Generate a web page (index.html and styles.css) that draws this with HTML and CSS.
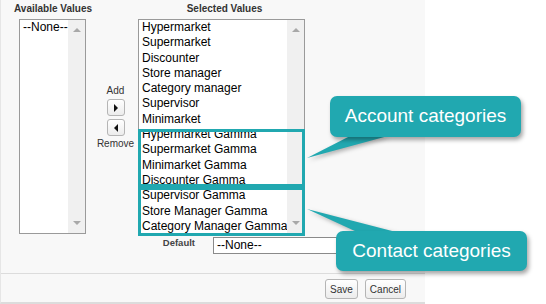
FILE: index.html
```html
<!doctype html>
<html lang="en">
<head>
  <meta charset="utf-8">
  <title>Picklist values</title>
  <link rel="stylesheet" href="styles.css">
</head>
<body>

<div class="panel">
  <div class="picker">
    <div class="col col-avail">
      <div class="lbl">Available Values</div>
      <div class="listbox avail">
        <div class="opts">
          <div class="opt">--None--</div>
        </div>
        <div class="sbar"><span class="up"></span><span class="down"></span></div>
      </div>
    </div>

    <div class="col col-btns">
      <div class="small">Add</div>
      <button class="arrow"><span class="tri-right"></span></button>
      <button class="arrow"><span class="tri-left"></span></button>
      <div class="small">Remove</div>
    </div>

    <div class="col col-sel">
      <div class="lbl center">Selected Values</div>
      <div class="listbox sel">
        <div class="opts">
          <div class="opt">Hypermarket</div>
          <div class="opt">Supermarket</div>
          <div class="opt">Discounter</div>
          <div class="opt">Store manager</div>
          <div class="opt">Category manager</div>
          <div class="opt">Supervisor</div>
          <div class="opt">Minimarket</div>
          <div class="opt">Hypermarket Gamma</div>
          <div class="opt">Supermarket Gamma</div>
          <div class="opt">Minimarket Gamma</div>
          <div class="opt">Discounter Gamma</div>
          <div class="opt">Supervisor Gamma</div>
          <div class="opt">Store Manager Gamma</div>
          <div class="opt">Category Manager Gamma</div>
        </div>
        <div class="sbar"><span class="up"></span><span class="down"></span></div>
        <!-- highlight boxes drawn over the list -->
        <div class="mark mark-account"></div>
        <div class="mark mark-contact"></div>
      </div>
    </div>
  </div>

  <div class="default-row">
    <span class="dlbl">Default</span>
    <div class="dsel">--None--</div>
  </div>

  <div class="footer">
    <button class="btn">Save</button>
    <button class="btn">Cancel</button>
  </div>
</div>

<svg class="tails" width="546" height="304" viewBox="0 0 546 304">
  <polygon points="350,136 388,136 307,158" fill="#21a8b0"/>
  <polygon points="357,232 396,232 307,209" fill="#21a8b0"/>
</svg>
<div class="callout callout-account">Account categories</div>
<div class="callout callout-contact">Contact categories</div>

</body>
</html>
```

FILE: styles.css
```css
body {
  margin: 0;
  background: #fff;
  font-family: "Liberation Sans", Arial, sans-serif;
  color: #000;
}

.panel {
  width: 425px;
  height: 304px;
  box-sizing: border-box;
  background: #f8f8f8;
  border-left: 1px solid #e6e6e6;
  border-bottom: 2px solid #dcdcdc;
}

.picker {
  display: flex;
  padding-left: 13px;
  padding-top: 3px;
}

.col-avail {
  width: 72px;
}
.col-btns {
  width: 52px;
  box-sizing: border-box;
  display: flex;
  flex-direction: column;
  align-items: center;
  padding-top: 82px;
  padding-left: 7px;
}
.col-sel {
  width: 167px;
}

.lbl {
  font-size: 10px;
  font-weight: bold;
  color: #333;
  line-height: 12px;
  height: 12px;
  margin-bottom: 4px;
  white-space: nowrap;
}
.lbl.center {
  text-align: center;
  padding-left: 6px;
}

.listbox {
  position: relative;
  height: 215px;
  box-sizing: border-box;
  border: 1px solid #9a9a9a;
  background: #fff;
  display: flex;
}
.listbox.avail {
  width: 67px;
  margin-left: 5px;
}
.listbox.sel {
  width: 167px;
}

.opts {
  flex: 1;
  font-size: 12px;
  line-height: 15.3px;
  padding-left: 3px;
  white-space: nowrap;
  overflow: hidden;
}

.sbar {
  width: 17px;
  background: #f0f0f0;
  display: flex;
  flex-direction: column;
  justify-content: space-between;
  align-items: center;
  padding: 8px 0 8px;
}
.sbar .up {
  width: 0;
  height: 0;
  border-left: 4px solid transparent;
  border-right: 4px solid transparent;
  border-bottom: 4px solid #a8a8a8;
}
.sbar .down {
  width: 0;
  height: 0;
  border-left: 4px solid transparent;
  border-right: 4px solid transparent;
  border-top: 4px solid #a8a8a8;
}

.mark {
  position: absolute;
  left: -1px;
  width: 167px;
  box-sizing: border-box;
  border: 3px solid #21a8b0;
}
.mark-account {
  top: 109px;
  height: 58px;
}
.mark-contact {
  top: 167px;
  height: 49px;
}

.small {
  font-size: 10px;
  color: #333;
  line-height: 12px;
}

.arrow {
  width: 18px;
  height: 17px;
  margin: 2px 0 1px;
  padding: 0;
  border: 1px solid #b5b5b5;
  border-radius: 3px;
  background: linear-gradient(#ffffff, #ececec);
  display: flex;
  align-items: center;
  justify-content: center;
}
.arrow + .arrow {
  margin-top: 2px;
  margin-bottom: 2px;
}
.tri-right {
  width: 0;
  height: 0;
  border-top: 4px solid transparent;
  border-bottom: 4px solid transparent;
  border-left: 4px solid #111;
}
.tri-left {
  width: 0;
  height: 0;
  border-top: 4px solid transparent;
  border-bottom: 4px solid transparent;
  border-right: 4px solid #111;
}

.default-row {
  display: flex;
  align-items: flex-start;
  margin-top: 3px;
  height: 18px;
}
.dlbl {
  width: 194px;
  text-align: right;
  font-size: 9.5px;
  font-weight: bold;
  color: #444;
  line-height: 12px;
}
.dsel {
  margin-left: 18px;
  width: 132px;
  height: 17px;
  box-sizing: border-box;
  border: 1px solid #8a8a8a;
  background: #fff;
  font-size: 12px;
  line-height: 15px;
  padding-left: 3px;
}

.footer {
  margin-top: 18px;
  border-top: 1px solid #dcdcdc;
  display: flex;
  justify-content: flex-end;
  gap: 7px;
  padding: 5px 19px 0 0;
}
.btn {
  height: 20px;
  padding: 0 4px;
  border: 1px solid #b5b5b5;
  border-radius: 3px;
  background: linear-gradient(#ffffff, #ececec);
  font-family: "Liberation Sans", Arial, sans-serif;
  font-size: 10px;
  color: #333;
}

.tails {
  position: absolute;
  left: 0;
  top: 0;
  filter: drop-shadow(2px 2px 2px rgba(0, 0, 0, 0.3));
}

.callout {
  position: absolute;
  width: 191px;
  background: #21a8b0;
  color: #fff;
  font-size: 19px;
  text-align: center;
  border-radius: 7px;
  box-shadow: 2px 3px 4px rgba(0, 0, 0, 0.35);
}
.callout-account {
  left: 330px;
  top: 96px;
  height: 41px;
  line-height: 40px;
}
.callout-contact {
  left: 336px;
  top: 231px;
  height: 40px;
  line-height: 40px;
}
```
